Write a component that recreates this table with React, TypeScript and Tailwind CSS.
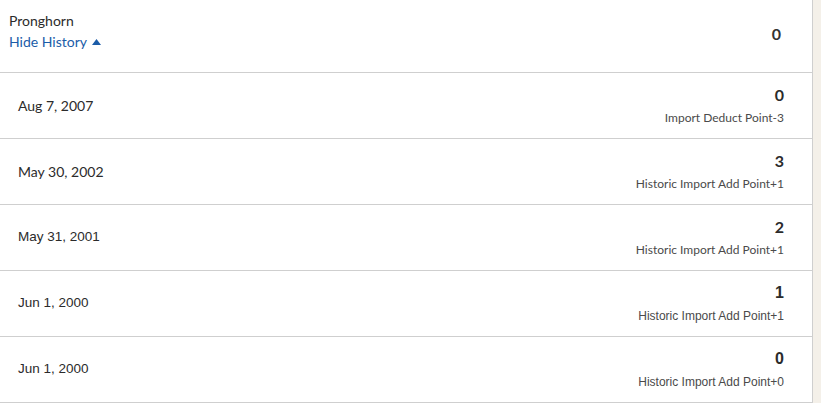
import React from 'react';

type HistoryRow = {
  date: string;
  score: number;
  note: string;
  dateArial?: boolean;
  noteArial?: boolean;
};

const LATO = 'font-[Lato,"Liberation_Sans",sans-serif]';
const ARIAL = 'font-["Liberation_Sans",Arial,sans-serif]';

const rows: HistoryRow[] = [
  { date: 'Aug 7, 2007', score: 0, note: 'Import Deduct Point-3' },
  { date: 'May 30, 2002', score: 3, note: 'Historic Import Add Point+1' },
  { date: 'May 31, 2001', score: 2, note: 'Historic Import Add Point+1', dateArial: true },
  { date: 'Jun 1, 2000', score: 1, note: 'Historic Import Add Point+1', dateArial: true, noteArial: true },
  { date: 'Jun 1, 2000', score: 0, note: 'Historic Import Add Point+0', dateArial: true, noteArial: true },
];

const App: React.FC = () => {
  return (
    <div className={`flex min-h-[403px] w-full bg-[#f4f0e9] ${LATO}`}>
      <div className="w-[813px] bg-white border-r border-[#cfcfcf]">
        {/* Header */}
        <div className="h-[73px] border-b border-[#cfcfcf] flex items-center justify-between pl-[9px] pr-[31px]">
          <div className="flex flex-col pb-[10px]">
            <span className="text-[14px] leading-[21px] text-[#2b2b2b]">Pronghorn</span>
            <button className="flex items-center gap-[5px] text-[14px] leading-[21px] text-[#1b5ca8]">
              Hide History
              <svg width="9" height="6" viewBox="0 0 9 6" className="mt-[1px]">
                <path d="M0 6 L4.5 0 L9 6 Z" fill="#1b5ca8" />
              </svg>
            </button>
          </div>
          <span className="text-[16px] font-bold text-[#333] pb-[4px]">0</span>
        </div>

        {/* History rows */}
        {rows.map((row, i) => (
          <div key={i} className="h-[66px] border-b border-[#cfcfcf] flex items-center justify-between pl-[18px] pr-[28px]">
            <span className={row.dateArial ? `text-[13.5px] text-[#2b2b2b] ${ARIAL}` : 'text-[14px] text-[#2b2b2b]'}>
              {row.date}
            </span>
            <div className={`flex flex-col items-end ${row.noteArial ? ARIAL : ''}`}>
              <span className="text-[16px] leading-[20px] font-bold text-[#2b2b2b]">{row.score}</span>
              <span className="text-[12px] leading-[18px] mt-[4px] text-[#4a4a4a]">{row.note}</span>
            </div>
          </div>
        ))}
      </div>
    </div>
  );
};

export default App;
